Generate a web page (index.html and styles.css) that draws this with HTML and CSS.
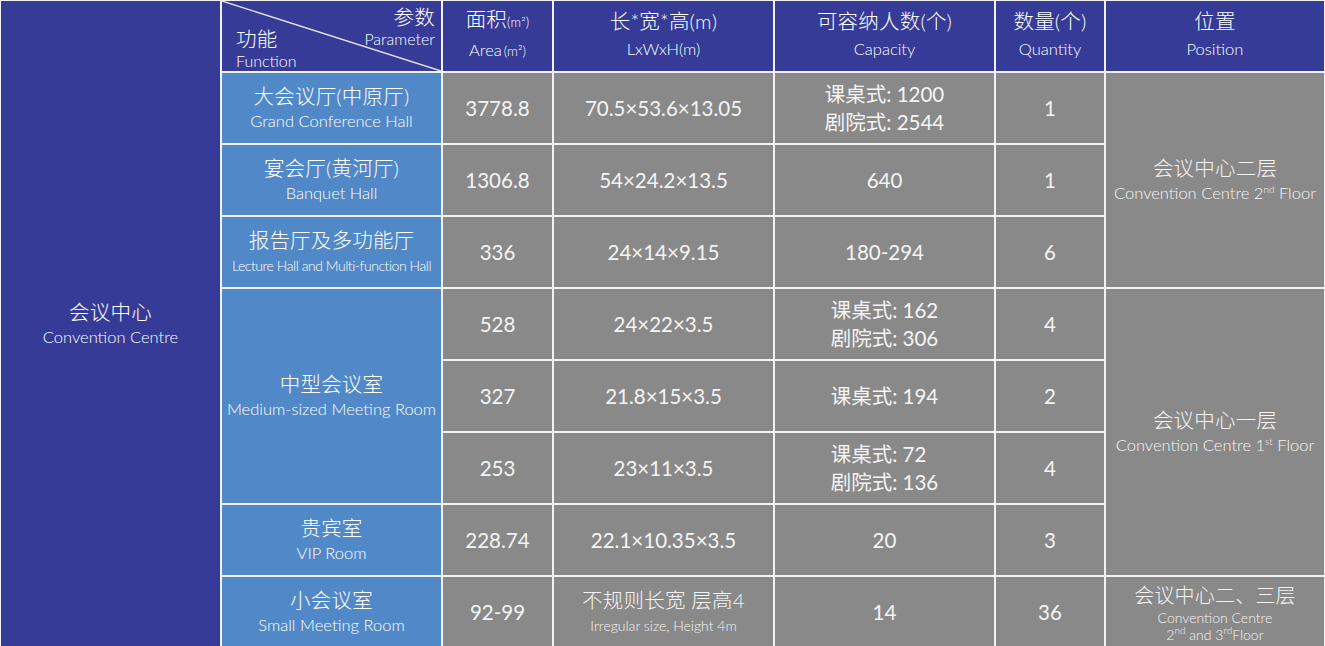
FILE: index.html
```html
<!DOCTYPE html>
<html lang="zh">
<head>
<meta charset="utf-8">
<title>会议中心</title>
<link rel="stylesheet" href="styles.css">
</head>
<body>
<div class="table">
  <div class="cell hd side">
    <div class="zh">会议中心</div>
    <div class="en">Convention Centre</div>
  </div>

  <div class="cell hd diag">
    <svg class="diag-line" viewBox="0 0 100 100" preserveAspectRatio="none"><line x1="0" y1="0" x2="100" y2="100" stroke="#e8e8f0" stroke-width="1.4" vector-effect="non-scaling-stroke"/></svg>
    <div class="diag-tr">
      <div class="zh">参数</div>
      <div class="en">Parameter</div>
    </div>
    <div class="diag-bl">
      <div class="zh">功能</div>
      <div class="en">Function</div>
    </div>
  </div>
  <div class="cell hd head">
    <div class="zh">面积<span class="unit">(m²)</span></div>
    <div class="en">Area<span class="unit2">(m²)</span></div>
  </div>
  <div class="cell hd head">
    <div class="zh">长*宽*高(m)</div>
    <div class="en">LxWxH(m)</div>
  </div>
  <div class="cell hd head">
    <div class="zh">可容纳人数(个)</div>
    <div class="en">Capacity</div>
  </div>
  <div class="cell hd head">
    <div class="zh">数量(个)</div>
    <div class="en">Quantity</div>
  </div>
  <div class="cell hd head">
    <div class="zh">位置</div>
    <div class="en">Position</div>
  </div>

  <!-- row 2 -->
  <div class="cell fn">
    <div class="zh">大会议厅(中原厅)</div>
    <div class="en">Grand Conference Hall</div>
  </div>
  <div class="cell gy num">3778.8</div>
  <div class="cell gy num">70.5×53.6×13.05</div>
  <div class="cell gy num">
    <div class="cap"><div>课桌式: 1200</div><div>剧院式: 2544</div></div>
  </div>
  <div class="cell gy num">1</div>
  <div class="cell gy pos span3">
    <div class="zh">会议中心二层</div>
    <div class="en">Convention Centre 2<sup>nd</sup> Floor</div>
  </div>

  <!-- row 3 -->
  <div class="cell fn">
    <div class="zh">宴会厅(黄河厅)</div>
    <div class="en">Banquet Hall</div>
  </div>
  <div class="cell gy num">1306.8</div>
  <div class="cell gy num">54×24.2×13.5</div>
  <div class="cell gy num">640</div>
  <div class="cell gy num">1</div>

  <!-- row 4 -->
  <div class="cell fn">
    <div class="zh">报告厅及多功能厅</div>
    <div class="en tight">Lecture Hall and Multi-function Hall</div>
  </div>
  <div class="cell gy num">336</div>
  <div class="cell gy num">24×14×9.15</div>
  <div class="cell gy num">180-294</div>
  <div class="cell gy num">6</div>

  <!-- row 5 -->
  <div class="cell fn span3">
    <div class="zh">中型会议室</div>
    <div class="en">Medium-sized Meeting Room</div>
  </div>
  <div class="cell gy num">528</div>
  <div class="cell gy num">24×22×3.5</div>
  <div class="cell gy num">
    <div class="cap"><div>课桌式: 162</div><div>剧院式: 306</div></div>
  </div>
  <div class="cell gy num">4</div>
  <div class="cell gy pos span4">
    <div class="zh">会议中心一层</div>
    <div class="en">Convention Centre 1<sup>st</sup> Floor</div>
  </div>

  <!-- row 6 -->
  <div class="cell gy num">327</div>
  <div class="cell gy num">21.8×15×3.5</div>
  <div class="cell gy num">
    <div class="cap"><div>课桌式: 194</div></div>
  </div>
  <div class="cell gy num">2</div>

  <!-- row 7 -->
  <div class="cell gy num">253</div>
  <div class="cell gy num">23×11×3.5</div>
  <div class="cell gy num">
    <div class="cap"><div>课桌式: 72</div><div>剧院式: 136</div></div>
  </div>
  <div class="cell gy num">4</div>

  <!-- row 8 -->
  <div class="cell fn">
    <div class="zh">贵宾室</div>
    <div class="en">VIP Room</div>
  </div>
  <div class="cell gy num">228.74</div>
  <div class="cell gy num">22.1×10.35×3.5</div>
  <div class="cell gy num">20</div>
  <div class="cell gy num">3</div>

  <!-- row 9 -->
  <div class="cell fn">
    <div class="zh">小会议室</div>
    <div class="en">Small Meeting Room</div>
  </div>
  <div class="cell gy num">92-99</div>
  <div class="cell gy">
    <div class="zh">不规则长宽 层高4</div>
    <div class="en small">Irregular size, Height 4m</div>
  </div>
  <div class="cell gy num">14</div>
  <div class="cell gy num">36</div>
  <div class="cell gy pos last">
    <div class="zh">会议中心二、三层</div>
    <div class="en l2">Convention Centre</div>
    <div class="en l2">2<sup>nd</sup> and 3<sup>rd</sup>Floor</div>
  </div>
</div>
</body>
</html>
```
FILE: styles.css
```css
html, body {
  margin: 0;
  padding: 0;
  background: #f2f2f2;
  overflow: hidden;
}

body {
  width: 1325px;
  height: 646px;
  font-family: Lato, "Noto Sans CJK SC", sans-serif;
  font-weight: 400;
  color: #ffffff;
}

.table {
  display: grid;
  grid-template-columns: 219px 219px 109px 219px 219px 108px 218px;
  grid-template-rows: repeat(9, 70px);
  gap: 2px;
  padding: 1px 1px 0 1px;
  background: #f2f2f2;
}

.cell {
  display: flex;
  flex-direction: column;
  align-items: center;
  justify-content: center;
  text-align: center;
  min-width: 0;
  overflow: hidden;
}

.hd { background: #353b96; }
.fn { background: #5188c7; }
.gy { background: #898989; color: #f4f4f4; }

.side {
  grid-row: 1 / span 9;
}

.span3 { grid-row: span 3; }
.span4 { grid-row: span 4; }

.zh {
  font-family: Lato, "Noto Sans CJK SC", sans-serif;
  font-weight: 300;
  font-size: 20.5px;
  line-height: 26px;
  letter-spacing: 0.2px;
  white-space: nowrap;
}

.en {
  font-size: 16.5px;
  font-weight: 300;
  line-height: 25px;
  white-space: nowrap;
}

.tight {
  font-size: 14px;
  letter-spacing: -0.45px;
}

.small {
  font-size: 14px;
}

.num {
  font-size: 20.5px;
  line-height: 28px;
}

.cap {
  text-align: left;
  font-size: 20.5px;
  font-weight: 400;
  line-height: 28px;
  white-space: nowrap;
}

.head .zh { line-height: 28px; margin-top: -2px; }
.head .en { line-height: 28px; }

.unit {
  font-size: 13px;
}

.unit2 {
  font-size: 13.5px;
  margin-left: 2px;
}

sup {
  font-size: 10px;
  line-height: 0;
  vertical-align: 6px;
}

.last { justify-content: flex-start; padding-top: 4px; }
.last .zh { font-size: 20px; line-height: 28px; }
.last .l2 { line-height: 17px; font-size: 14px; }

.diag {
  position: relative;
  display: block;
}

.diag-line {
  position: absolute;
  left: 0;
  top: 0;
  width: 100%;
  height: 100%;
}

.diag-tr {
  position: absolute;
  right: 6px;
  top: 4px;
  text-align: right;
}

.diag-tr .zh { line-height: 24px; }
.diag-tr .en { font-size: 16px; line-height: 20px; }

.diag-bl {
  position: absolute;
  left: 14px;
  top: 25px;
  text-align: left;
}

.diag-bl .zh { line-height: 26px; }
.diag-bl .en { font-size: 16px; line-height: 18px; }
```
